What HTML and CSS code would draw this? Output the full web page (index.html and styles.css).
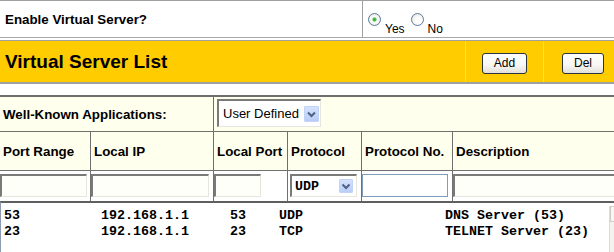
FILE: index.html
```html
<!DOCTYPE html>
<html>
<head>
<meta charset="utf-8">
<title>Virtual Server</title>
<link rel="stylesheet" href="styles.css">
</head>
<body>
<div class="page">
  <div class="enable-row">
    <div class="enable-label">Enable Virtual Server?</div>
    <div class="enable-choice">
      <label class="radio"><input type="radio" name="vs" checked><span>Yes</span></label>
      <label class="radio"><input type="radio" name="vs"><span>No</span></label>
    </div>
  </div>

  <div class="title-bar">
    <div class="title">Virtual Server List</div>
    <div class="title-btn"><button class="btn">Add</button></div>
    <div class="title-btn"><button class="btn">Del</button></div>
  </div>

  <div class="grid">
    <div class="cell wk-label">Well-Known Applications:</div>
    <div class="cell wk-select sep">
      <div class="sel sel-app">
        <span class="sel-text">User Defined</span>
        <span class="sel-arrow"><svg width="15" height="16" viewBox="0 0 15 16"><path d="M4 6.5 L7.5 10 L11 6.5" fill="none" stroke="#4d6185" stroke-width="2"/></svg></span>
      </div>
    </div>

    <div class="cell head">Port Range</div>
    <div class="cell head sep">Local IP</div>
    <div class="cell head sep">Local Port</div>
    <div class="cell head sep">Protocol</div>
    <div class="cell head sep">Protocol No.</div>
    <div class="cell head sep">Description</div>

    <div class="cell in"><input class="txt w-range" type="text"></div>
    <div class="cell in sep"><input class="txt w-ip" type="text"></div>
    <div class="cell in sep"><input class="txt w-port" type="text"></div>
    <div class="cell in sep">
      <div class="sel sel-proto">
        <span class="sel-text mono">UDP</span>
        <span class="sel-arrow small"><svg width="14" height="14" viewBox="0 0 14 14"><path d="M3.5 5.5 L7 9 L10.5 5.5" fill="none" stroke="#4d6185" stroke-width="2"/></svg></span>
      </div>
    </div>
    <div class="cell in sep"><input class="txt xp w-pno" type="text"></div>
    <div class="cell in sep"><input class="txt w-desc" type="text"></div>
  </div>

  <div class="list">
    <div class="rows">
      <div class="row"><span>53</span><span>192.168.1.1</span><span>53</span><span>UDP</span><span>DNS Server (53)</span></div>
      <div class="row"><span>23</span><span>192.168.1.1</span><span>23</span><span>TCP</span><span>TELNET Server (23)</span></div>
    </div>
    <div class="scrollbar"><div class="sb-btn"></div></div>
  </div>
</div>
</body>
</html>
```

FILE: styles.css
```css
html, body {
  margin: 0;
  padding: 0;
  overflow: hidden;
  background: #ffffff;
}

.page {
  width: 622px;
  font-family: "Liberation Sans", Arial, sans-serif;
  color: #000;
}

/* Row 1 */
.enable-row {
  display: grid;
  grid-template-columns: 362px 1fr;
  height: 36px;
  border-top: 1px solid #a0a0a0;
  border-bottom: 1px solid #a8a8a8;
}
.enable-label {
  align-self: center;
  padding-left: 5px;
  font-weight: bold;
  font-size: 13.33px;
}
.enable-choice {
  border-left: 1px solid #a0a0a0;
  display: flex;
  align-items: flex-start;
  padding-left: 5px;
}
.radio {
  display: flex;
  align-items: flex-start;
  margin-right: 6px;
}
.radio input {
  -webkit-appearance: none;
  appearance: none;
  margin: 12px 4px 0 0;
  width: 13px;
  height: 13px;
  border: 1px solid #5d7a9c;
  border-radius: 50%;
  background: radial-gradient(circle at 60% 60%, #ffffff 30%, #dcdbd5 100%);
  box-sizing: border-box;
}
.radio input:checked {
  background: radial-gradient(circle at 50% 50%, #2ea52e 0, #55c255 1.6px, #fafafa 2.6px, #ffffff 30%, #dcdbd5 100%);
}
.radio span {
  margin-top: 21px;
  font-size: 12px;
  line-height: 14px;
}

/* Title bar */
.title-bar {
  margin-top: 2px;
  display: grid;
  grid-template-columns: 465px 78px 79px;
  height: 41px;
  background: #ffcc00;
  border-top: 1px solid #a0a0a0;
  border-bottom: 2px solid #a0a0a0;
}
.title {
  align-self: center;
  padding-left: 5px;
  font-weight: bold;
  font-size: 19px;
}
.title-btn {
  border-left: 1px solid #d8d8d0;
  display: flex;
  justify-content: center;
  align-items: center;
  padding-top: 3px;
}
.btn {
  width: 45px;
  height: 21px;
  padding: 0;
  border: 1px solid #2a3440;
  border-radius: 3px;
  background: linear-gradient(#ffffff 0%, #f6f6f3 60%, #e2e0d8 100%);
  font-family: "Liberation Sans", Arial, sans-serif;
  font-size: 12px;
  color: #000;
}
.title-btn:last-child .btn {
  width: 42px;
}

/* Grid table */
.grid {
  margin-top: 11px;
  display: grid;
  grid-template-columns: 90px 123px 74px 74px 91px 170px;
  border-top: 2px solid #6e6e6e;
  background: #ffffee;
}
.cell {
  box-sizing: border-box;
}
.sep {
  border-left: 1px solid #707070;
}
.wk-label {
  grid-column: 1 / 3;
  height: 34px;
  display: flex;
  align-items: center;
  padding-left: 3px;
  font-weight: bold;
  font-size: 13.33px;
}
.wk-select {
  grid-column: 3 / 7;
  padding: 2px 0 0 3px;
}
.head {
  height: 39px;
  border-top: 1px solid #707070;
  display: flex;
  align-items: center;
  padding-left: 3px;
  font-weight: bold;
  font-size: 13.33px;
  white-space: nowrap;
}
.in {
  height: 31px;
  border-top: 1px solid #707070;
  background: #ffffff;
  padding-top: 3px;
}

.sel {
  position: relative;
  box-sizing: border-box;
  background: #ffffff;
  border-style: solid;
  border-width: 2px 1px 1px 2px;
  border-color: #7a7a7a #e6e6de #e6e6de #7a7a7a;
  display: flex;
  align-items: center;
}
.sel-app {
  width: 104px;
  height: 28px;
  padding-left: 4px;
  font-size: 13px;
}
.sel-proto {
  width: 67px;
  height: 23px;
  margin-left: 2px;
  padding-left: 3px;
}
.sel-arrow {
  position: absolute;
  right: 1px;
  top: 50%;
  transform: translateY(-50%);
  width: 15px;
  height: 16px;
  background: linear-gradient(#d6e2fc, #b9cdf7);
  border: 1px solid #c3d3f6;
  box-sizing: border-box;
  border-radius: 1px;
}
.sel-arrow svg {
  display: block;
  margin: -1px;
}
.sel-arrow.small {
  width: 14px;
  height: 14px;
  right: 3px;
}
.mono {
  font-family: "Liberation Mono", "DejaVu Sans Mono", monospace;
  font-weight: bold;
  font-size: 13.33px;
}

.txt {
  display: block;
  box-sizing: border-box;
  height: 23px;
  margin: 0;
  padding: 0 2px;
  border-style: solid;
  border-width: 2px 1px 1px 2px;
  border-color: #7a7a7a #e6e6de #e6e6de #7a7a7a;
  background: #fffffa;
  outline: none;
}
.txt.xp {
  border: 1px solid #7f9db9;
  background: #ffffff;
}
.w-range { width: 87px; }
.w-ip { width: 118px; }
.w-port { width: 47px; }
.w-pno { width: 86px; }
.w-desc { width: 165px; }

/* List */
.list {
  display: flex;
  height: 60px;
  border-top: 2px solid #5f5f5f;
  border-left: 1px solid #8c9bae;
  background: #ffffff;
}
.rows {
  flex: 1;
  padding: 5px 0 0 3px;
  font-family: "Liberation Mono", "DejaVu Sans Mono", monospace;
  font-weight: bold;
  font-size: 13.33px;
  line-height: 16px;
}
.row {
  display: grid;
  grid-template-columns: 97px 129px 49px 166px auto;
  white-space: pre;
}
.scrollbar {
  width: 12px;
  margin-top: 3px;
  border-left: 1px solid #dedbd2;
  background: #f4f3ee;
}
.sb-btn {
  height: 14px;
  border: 1px solid #cfcdc4;
  border-right: none;
  background: #f7f6f2;
}
```
